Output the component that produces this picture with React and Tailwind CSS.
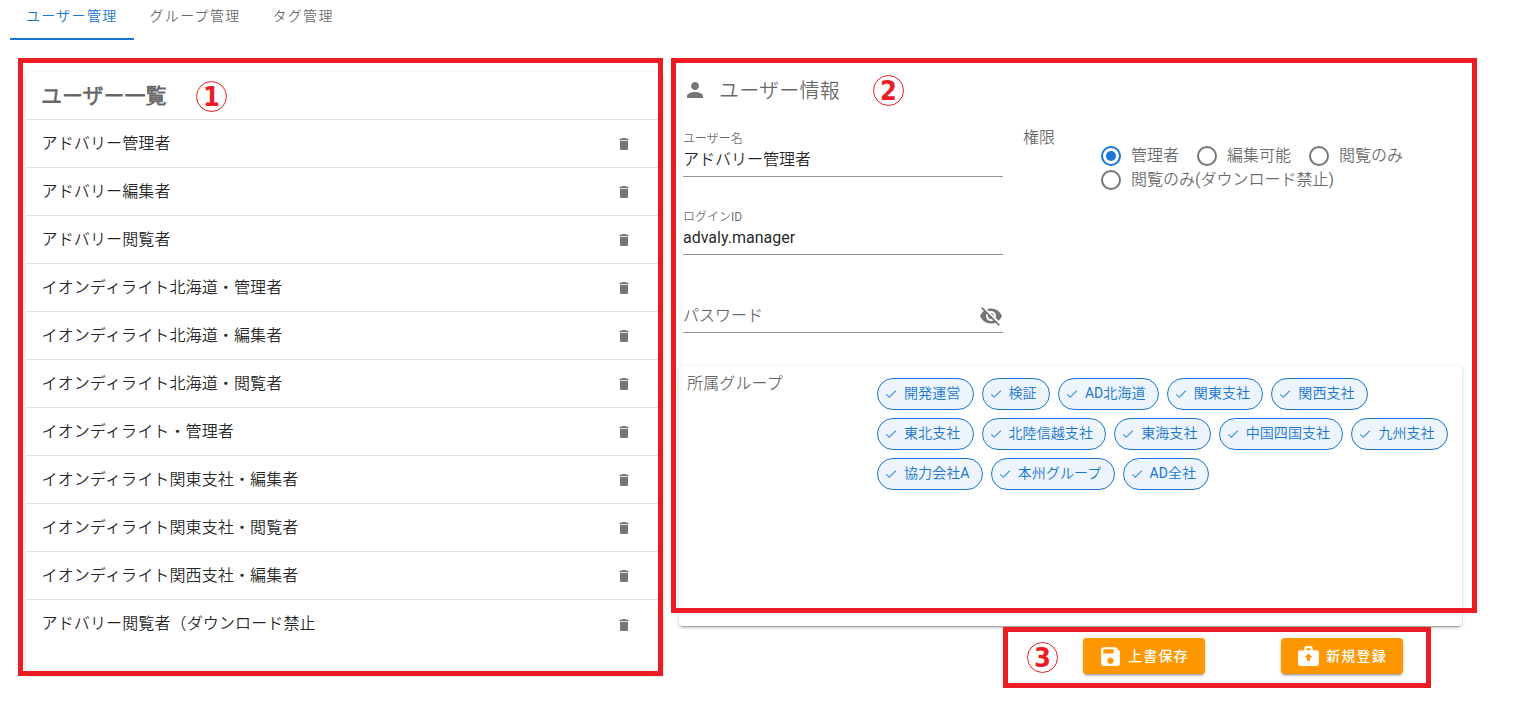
import { MdCheck, MdDelete, MdPerson, MdSave, MdVisibilityOff } from "react-icons/md";

const TABS = ["ユーザー管理", "グループ管理", "タグ管理"];

const USERS = [
  "アドバリー管理者",
  "アドバリー編集者",
  "アドバリー閲覧者",
  "イオンディライト北海道・管理者",
  "イオンディライト北海道・編集者",
  "イオンディライト北海道・閲覧者",
  "イオンディライト・管理者",
  "イオンディライト関東支社・編集者",
  "イオンディライト関東支社・閲覧者",
  "イオンディライト関西支社・編集者",
  "アドバリー閲覧者（ダウンロード禁止",
];

const GROUPS = [
  "開発運営", "検証", "AD北海道", "関東支社", "関西支社",
  "東北支社", "北陸信越支社", "東海支社", "中国四国支社", "九州支社",
  "協力会社A", "本州グループ", "AD全社",
];

const ELEVATION =
  "shadow-[0_3px_1px_-2px_rgba(0,0,0,0.2),0_2px_2px_0_rgba(0,0,0,0.14),0_1px_5px_0_rgba(0,0,0,0.12)]";

function Tabs() {
  return (
    <nav className="flex h-10 pl-[10px]">
      {TABS.map((tab, i) => (
        <button
          key={tab}
          className={
            "flex h-10 items-start border-b-2 px-4 pt-[6px] text-sm leading-5 tracking-[1.3px] " +
            (i === 0 ? "border-[#1976d2] text-[#1976d2]" : "border-transparent text-black/60")
          }
        >
          {tab}
        </button>
      ))}
    </nav>
  );
}

function UserList() {
  return (
    <section className={"h-[602px] w-[637px] shrink-0 rounded bg-white " + ELEVATION}>
      <h2 className="flex h-[47px] items-center pl-[15px] pr-4 text-[21px] font-bold leading-8 text-black/60">
        ユーザー一覧
      </h2>
      <ul>
        {USERS.map((user) => (
          <li
            key={user}
            className="group flex h-12 items-center justify-between border-t border-black/12 pl-[15.5px] pr-[31.5px] text-base text-black/87"
          >
            <span className="leading-6 tracking-[0.13px]">{user}</span>
            <MdDelete className="size-4 text-[#757575] group-last:mt-[2px]" />
          </li>
        ))}
      </ul>
    </section>
  );
}

function Field({ label, value }) {
  return (
    <div className="flex h-[46px] w-80 flex-col border-b border-[#949494]">
      <span className="text-xs leading-4 text-black/60">{label}</span>
      <span className="pt-px text-base leading-6 text-black/87">{value}</span>
    </div>
  );
}

function Radio({ label, checked }) {
  return (
    <label className="flex h-6 items-center gap-2 text-base text-black/60">
      <svg
        viewBox="0 0 24 24"
        className={"size-6 " + (checked ? "text-[#1976d2]" : "text-[#757575]")}
        fill="none"
        stroke="currentColor"
        strokeWidth="2"
      >
        <circle cx="12" cy="12" r="9" />
        {checked && <circle cx="12" cy="12" r="5" fill="currentColor" stroke="none" />}
      </svg>
      <span className="leading-6">{label}</span>
    </label>
  );
}

function Chip({ label }) {
  return (
    <span className="flex h-8 items-center rounded-full border border-[#1976d2] bg-[#edf4fb] pl-[6px] pr-[12.2px] text-sm text-[#1976d2]">
      <MdCheck className="mr-[6px] size-[14px] opacity-80" />
      <span className="-mt-[3px] leading-5 tracking-[0.08px]">{label}</span>
    </span>
  );
}

function UploadBriefcase() {
  return (
    <svg viewBox="0 0 24 24" className="size-[25px]" fill="currentColor">
      <path d="M10,2H14A2,2 0 0,1 16,4V6H20A2,2 0 0,1 22,8V19A2,2 0 0,1 20,21H4C2.89,21 2,20.1 2,19V8C2,6.89 2.89,6 4,6H8V4C8,2.89 8.89,2 10,2M14,6V4H10V6H14M12,9L8,13H10.5V16H13.5V13H16L12,9Z" />
    </svg>
  );
}

function ActionButton({ icon, label }) {
  return (
    <button
      className={
        "flex h-9 w-[122px] items-center gap-[5px] rounded bg-[#ff9800] pl-[15px] font-['Roboto','Noto_Sans_CJK_JP',sans-serif] text-sm font-medium tracking-[1.25px] text-white " +
        ELEVATION
      }
    >
      {icon}
      <span className="-mt-px leading-5">{label}</span>
    </button>
  );
}

function UserInfo() {
  return (
    <section className="ml-4 w-[783px] shrink-0">
      <header className="mt-[6px] flex h-6 items-center gap-3 pl-1">
        <MdPerson className="size-6 text-[#757575]" />
        <h2 className="pt-[2px] text-xl leading-6 tracking-[0.25px] text-black/60">ユーザー情報</h2>
      </header>

      <div className="mt-[29px] flex pl-1">
        <div className="flex w-80 flex-col gap-8">
          <Field label="ユーザー名" value="アドバリー管理者" />
          <Field label="ログインID" value="advaly.manager" />
          <div className="flex h-[46px] items-end justify-between border-b border-[#949494] pb-1">
            <span className="text-base leading-6 text-black/60">パスワード</span>
            <MdVisibilityOff className="size-6 text-[#757575]" />
          </div>
        </div>
        <div className="ml-5 flex">
          <span className="-mt-[5px] w-[76px] text-base leading-6 text-black/60">権限</span>
          <div className="mt-[13px] flex w-[330px] flex-wrap content-start gap-x-4">
            <Radio label="管理者" checked />
            <Radio label="編集可能" />
            <Radio label="閲覧のみ" />
            <Radio label="閲覧のみ(ダウンロード禁止)" />
          </div>
        </div>
      </div>

      <div className={"mt-[33px] flex h-[260px] rounded bg-white pl-2 " + ELEVATION}>
        <h3 className="w-[190px] shrink-0 pt-[6px] text-base leading-6 tracking-[0.15px] text-black/60">所属グループ</h3>
        <div className="flex w-[575px] flex-wrap content-start gap-2 pt-3">
          {GROUPS.map((g) => (
            <Chip key={g} label={g} />
          ))}
        </div>
      </div>

      <div className="mt-3 flex gap-[76px] pl-[404px]">
        <ActionButton icon={<MdSave className="size-[25px]" />} label="上書保存" />
        <ActionButton icon={<UploadBriefcase />} label="新規登録" />
      </div>
    </section>
  );
}

function Marker({ n, className }) {
  return (
    <span
      className={
        "absolute flex size-[31px] items-center justify-center rounded-full border border-[#ed1c24] font-['DejaVu_Sans_Condensed','DejaVu_Sans',sans-serif] text-[27px] font-bold leading-none text-[#ed1c24] " +
        className
      }
    >
      {n}
    </span>
  );
}

export default function App() {
  return (
    <div className="relative h-[703px] w-[1520px] overflow-hidden bg-white font-['Roboto','Noto_Sans_CJK_JP_DemiLight','Noto_Sans_CJK_JP_Light','Noto_Sans_CJK_JP',sans-serif]">
      <Tabs />
      <main className="flex pl-[26px] pt-8">
        <UserList />
        <UserInfo />
      </main>

      <div className="absolute left-[18px] top-[58px] h-[618px] w-[645px] border-5 border-[#ed1c24]" />
      <div className="absolute left-[671px] top-[58px] h-[555px] w-[806px] border-5 border-[#ed1c24]" />
      <div className="absolute left-[1003px] top-[627px] h-[61px] w-[428px] border-5 border-[#ed1c24]" />
      <Marker n="1" className="left-[196px] top-[81px]" />
      <Marker n="2" className="left-[873px] top-[75px]" />
      <Marker n="3" className="left-[1027px] top-[642px]" />
    </div>
  );
}
